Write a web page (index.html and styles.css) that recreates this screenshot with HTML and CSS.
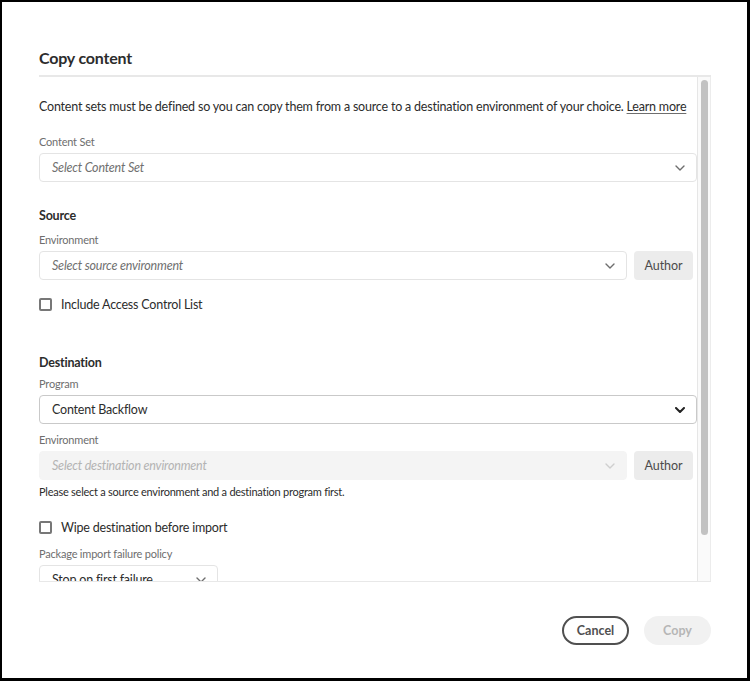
FILE: index.html
```html
<!DOCTYPE html>
<html lang="en">
<head>
  <meta charset="UTF-8" />
  <meta name="viewport" content="width=device-width, initial-scale=1.0" />
  <title>Copy content</title>
  <link rel="stylesheet" href="styles.css">
</head>
<body>
  <div class="frame">
    <div class="dialog">
      <h1 class="dialog-title">Copy content</h1>

      <div class="dialog-body">
        <div class="form">
          <p class="intro">Content sets must be defined so you can copy them from a source to a destination environment of your choice. <a href="#">Learn more</a></p>

          <div class="field-label gap-17">Content Set</div>
          <div class="picker">
            <span class="placeholder">Select Content Set</span>
            <svg class="chevron" viewBox="0 0 10 6"><path d="M1 1l4 4 4-4" /></svg>
          </div>

          <h2 class="section-title">Source</h2>
          <div class="field-label">Environment</div>
          <div class="picker-row">
            <div class="picker">
              <span class="placeholder">Select source environment</span>
              <svg class="chevron" viewBox="0 0 10 6"><path d="M1 1l4 4 4-4" /></svg>
            </div>
            <button class="tier-btn">Author</button>
          </div>
          <label class="check gap-14"><span class="check-box"></span>Include Access Control List</label>

          <h2 class="section-title dest">Destination</h2>
          <div class="field-label gap-3">Program</div>
          <div class="picker filled">
            <span class="value">Content Backflow</span>
            <svg class="chevron" viewBox="0 0 10 6"><path d="M1 1l4 4 4-4" /></svg>
          </div>
          <div class="field-label gap-8">Environment</div>
          <div class="picker-row">
            <div class="picker disabled">
              <span class="placeholder">Select destination environment</span>
              <svg class="chevron" viewBox="0 0 10 6"><path d="M1 1l4 4 4-4" /></svg>
            </div>
            <button class="tier-btn">Author</button>
          </div>
          <div class="help-text">Please select a source environment and a destination program first.</div>
          <label class="check gap-17"><span class="check-box"></span>Wipe destination before import</label>

          <div class="field-label gap-9">Package import failure policy</div>
          <div class="picker small">
            <span class="value">Stop on first failure</span>
            <svg class="chevron" viewBox="0 0 10 6"><path d="M1 1l4 4 4-4" /></svg>
          </div>
        </div>

        <!-- scrollbar of the form area -->
        <div class="scroll-track"><div class="scroll-thumb"></div></div>
      </div>

      <div class="dialog-footer">
        <button class="btn btn-outline">Cancel</button>
        <button class="btn btn-cta" disabled>Copy</button>
      </div>
    </div>
  </div>
</body>
</html>
```

FILE: styles.css
```css
* {
  box-sizing: border-box;
}

body {
  margin: 0;
  background: #fff;
  font-family: 'Lato', 'Open Sans', sans-serif;
  color: #2c2c2c;
}

.frame {
  width: 750px;
  height: 681px;
  border: 2px solid #000;
  border-right-width: 3px;
  border-bottom-width: 3px;
  background: #fff;
}

.dialog {
  padding: 44px 36px 0 37px;
}

.dialog-title {
  margin: 0;
  padding-bottom: 5px;
  border-bottom: 2px solid #e8e8e8;
  font-size: 16px;
  line-height: 24px;
  font-weight: 700;
  letter-spacing: -0.2px;
  color: #2c2c2c;
}

/* form area + its scrollbar */
.dialog-body {
  display: flex;
  height: 505px;
  border-bottom: 1px solid #e8e8e8;
}

.form {
  flex: 1;
  overflow: hidden;
  padding-top: 20px;
}

.scroll-track {
  width: 14px;
  padding: 3px 2px 0 3px;
  background: #fafafa;
  border-left: 1px solid #e6e6e6;
  border-right: 1px solid #ececec;
}

.scroll-thumb {
  height: 455px;
  border-radius: 4px;
  background: #c2c2c2;
}

.intro {
  margin: 0;
  font-size: 12.5px;
  line-height: 20px;
  letter-spacing: -0.2px;
  color: #2c2c2c;
}

.intro a {
  color: #2c2c2c;
  text-decoration: underline;
  text-decoration-color: #6e6e6e;
  text-underline-offset: 2px;
}

.field-label {
  margin-top: 6px;
  margin-bottom: 3px;
  font-size: 11px;
  line-height: 16px;
  letter-spacing: -0.2px;
  color: #6e6e6e;
}

.gap-3 { margin-top: 3px; }
.gap-8 { margin-top: 8px; }
.gap-9 { margin-top: 9px; }
.gap-14 { margin-top: 14px; }
.gap-17 { margin-top: 17px; }

.picker {
  display: flex;
  align-items: center;
  justify-content: space-between;
  height: 29px;
  padding: 0 11px 0 12px;
  border: 1px solid #e4e4e4;
  border-radius: 4px;
  background: #fff;
  font-size: 12.5px;
  letter-spacing: -0.2px;
}

.placeholder {
  font-style: italic;
  color: #707070;
}

.value {
  color: #2c2c2c;
}

.chevron {
  width: 10px;
  height: 6px;
  fill: none;
  stroke: #6e6e6e;
  stroke-width: 1.4;
  stroke-linecap: round;
  stroke-linejoin: round;
}

.picker.filled {
  border-color: #c9c9c9;
}

.picker.filled .chevron {
  stroke: #222;
  stroke-width: 2;
}

.picker.disabled {
  border-color: #f4f4f4;
  background: #f4f4f4;
}

.picker.disabled .placeholder {
  color: #b3b3b3;
}

.picker.disabled .chevron {
  stroke: #cfcfcf;
}

.picker.small {
  width: 179px;
}

.picker-row {
  display: flex;
  align-items: stretch;
  gap: 7px;
  padding-right: 4px;
}

.picker-row .picker {
  flex: 1;
}

.tier-btn {
  width: 59px;
  height: 29px;
  border: none;
  border-radius: 4px;
  background: #ececec;
  font-family: inherit;
  font-size: 12.5px;
  letter-spacing: -0.1px;
  color: #4b4b4b;
}

.section-title {
  margin: 24px 0 0 0;
  font-size: 12.5px;
  line-height: 20px;
  font-weight: 700;
  letter-spacing: -0.2px;
  color: #2c2c2c;
}

.section-title.dest {
  margin-top: 39px;
}

.check {
  display: flex;
  align-items: center;
  height: 20px;
  font-size: 12.5px;
  letter-spacing: -0.2px;
  color: #2c2c2c;
}

.check-box {
  width: 13px;
  height: 13px;
  margin-right: 9px;
  border: 2px solid #777;
  border-radius: 2px;
}

.help-text {
  margin-top: 4px;
  font-size: 11px;
  line-height: 16px;
  letter-spacing: -0.25px;
  color: #2c2c2c;
}

.dialog-footer {
  display: flex;
  justify-content: flex-end;
  gap: 15px;
  padding-top: 34px;
}

.btn {
  width: 67px;
  height: 29px;
  border-radius: 15px;
  font-family: inherit;
  font-size: 12.5px;
  font-weight: 700;
}

.btn-outline {
  border: 2px solid #505050;
  background: #fff;
  color: #505050;
}

.btn-cta {
  border: none;
  background: #f1f1f1;
  color: #b6b6b6;
}
```
